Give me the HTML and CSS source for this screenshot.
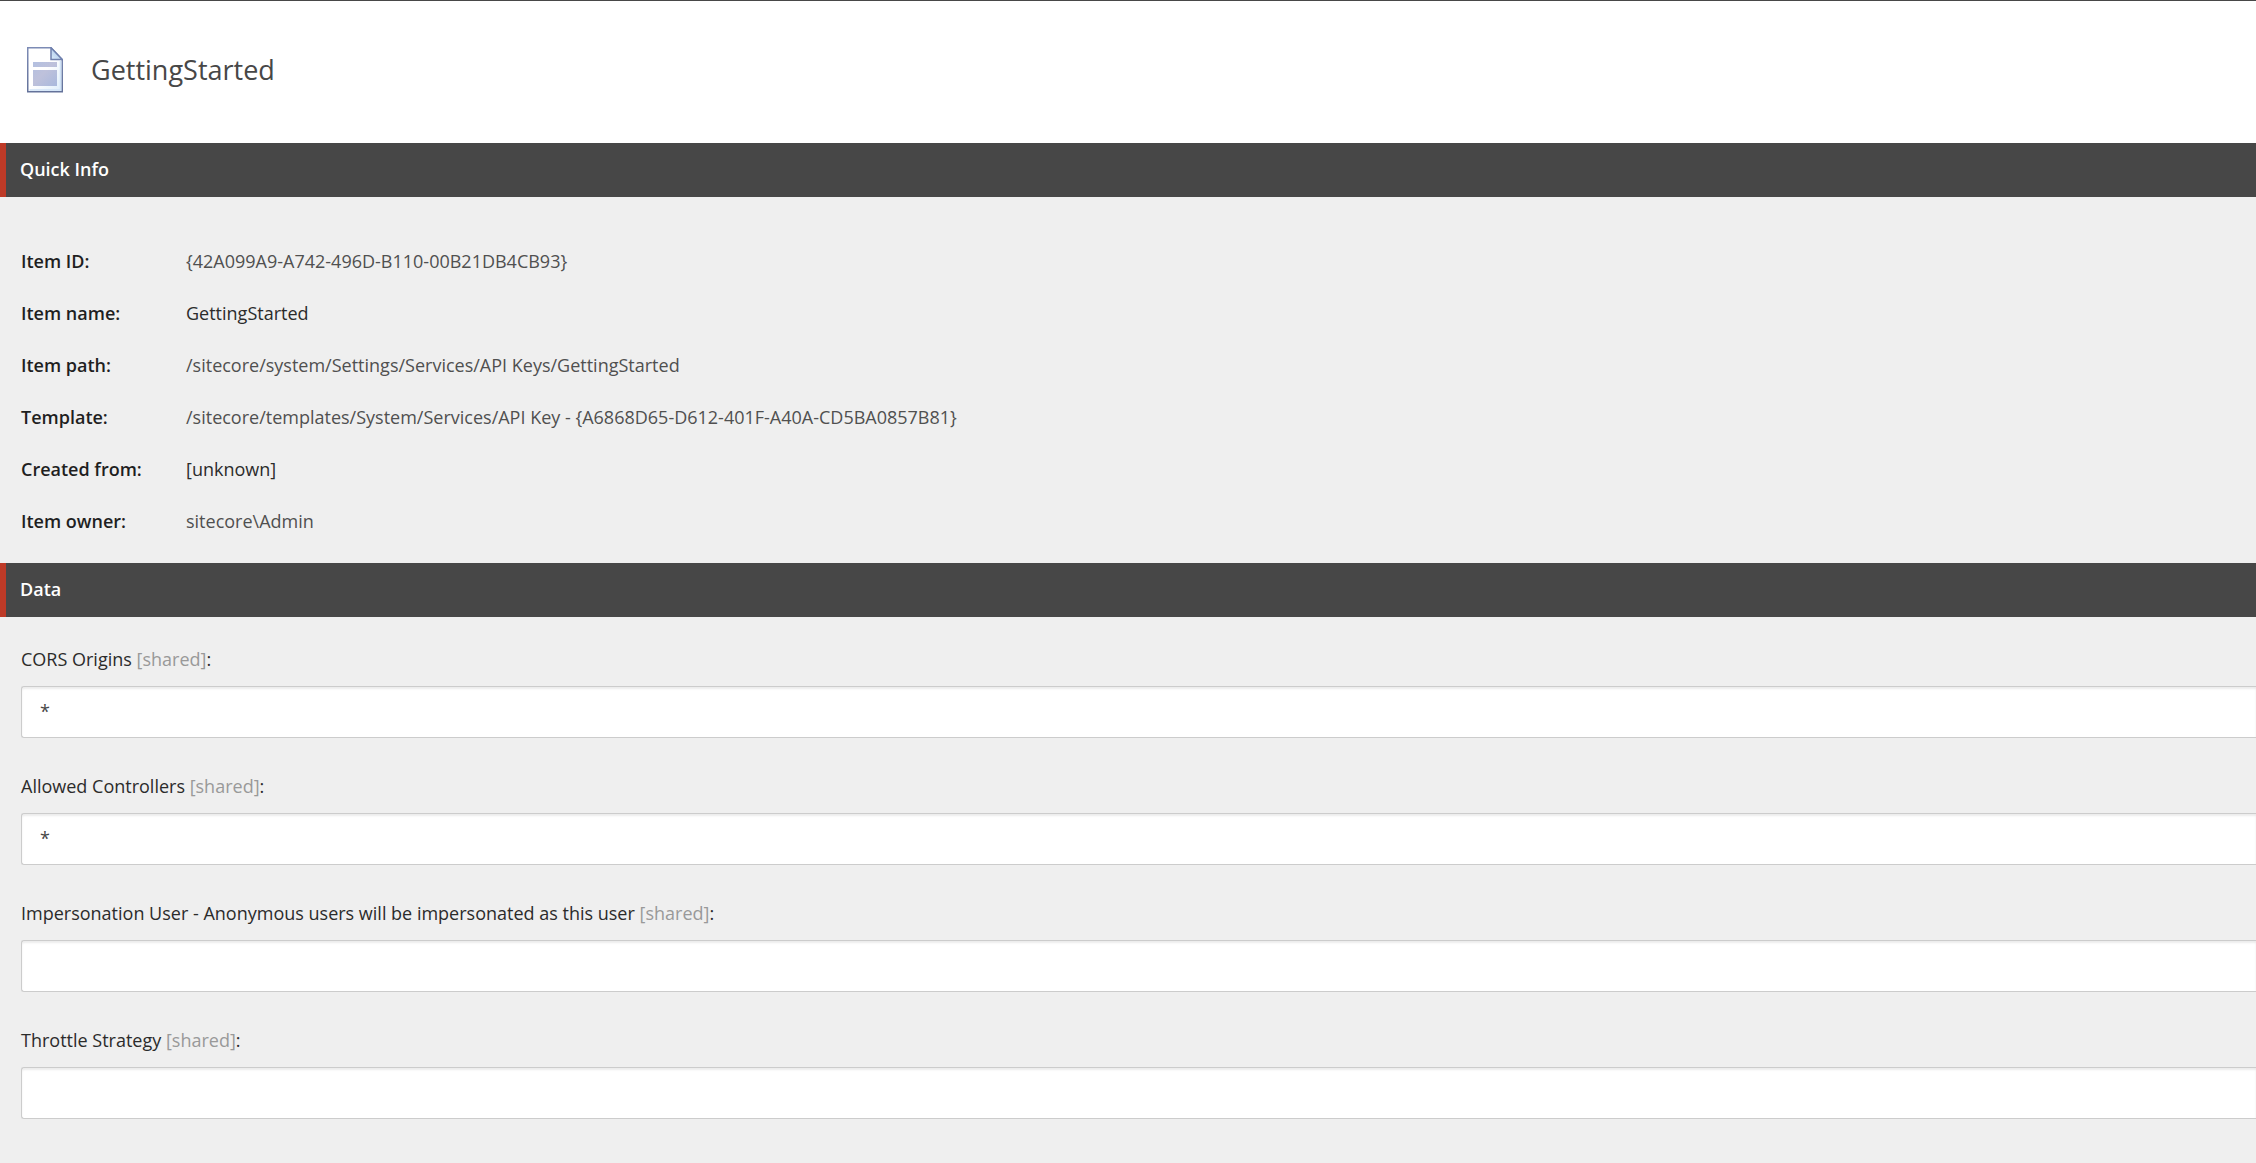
FILE: index.html
```html
<!DOCTYPE html>
<html lang="en">
<head>
    <meta charset="UTF-8">
    <meta name="viewport" content="width=device-width, initial-scale=1.0">
    <title>GettingStarted</title>
    <link rel="stylesheet" href="styles.css">
</head>
<body>
    <!-- Item header -->
    <header class="item-header">
        <svg class="item-icon" viewBox="0 0 36 46" aria-hidden="true">
            <defs>
                <linearGradient id="page" x1="0" y1="0" x2="1" y2="1">
                    <stop offset="0.5" stop-color="#ffffff"/>
                    <stop offset="1" stop-color="#dcecfb"/>
                </linearGradient>
                <linearGradient id="edge" x1="0" y1="0" x2="0" y2="1">
                    <stop offset="0" stop-color="#7c8bb5"/>
                    <stop offset="1" stop-color="#64729a"/>
                </linearGradient>
                <linearGradient id="block" gradientUnits="userSpaceOnUse" x1="6" y1="15" x2="30" y2="40">
                    <stop offset="0" stop-color="#b3c0e0"/>
                    <stop offset="0.45" stop-color="#bec1db"/>
                    <stop offset="1" stop-color="#a8b8dd"/>
                </linearGradient>
                <linearGradient id="fold" x1="0" y1="1" x2="1" y2="0">
                    <stop offset="0" stop-color="#dcedfc"/>
                    <stop offset="1" stop-color="#9dbce4"/>
                </linearGradient>
            </defs>
            <path d="M0.75 0.75H24L35.25 12.5V44.75H0.75Z" fill="url(#page)" stroke="url(#edge)" stroke-width="1.5"/>
            <path d="M2.5 43H33.5V14" fill="none" stroke="#cfe2f6" stroke-width="1.5"/>
            <path d="M24 0.75V12.5H35.25Z" fill="url(#fold)" stroke="#6f80ae" stroke-width="1.5"/>
            <rect x="6" y="15" width="24" height="5" fill="url(#block)"/>
            <rect x="6" y="23" width="24" height="16" fill="url(#block)"/>
        </svg>
        <h1 class="item-title">GettingStarted</h1>
    </header>

    <!-- Quick Info -->
    <section>
        <h2 class="section-title">Quick Info</h2>
        <table class="quick-info">
            <tr>
                <th scope="row">Item ID:</th>
                <td>{42A099A9-A742-496D-B110-00B21DB4CB93}</td>
            </tr>
            <tr>
                <th scope="row">Item name:</th>
                <td class="dark">GettingStarted</td>
            </tr>
            <tr>
                <th scope="row">Item path:</th>
                <td>/sitecore/system/Settings/Services/API Keys/GettingStarted</td>
            </tr>
            <tr>
                <th scope="row">Template:</th>
                <td>/sitecore/templates/System/Services/API Key - {A6868D65-D612-401F-A40A-CD5BA0857B81}</td>
            </tr>
            <tr>
                <th scope="row">Created from:</th>
                <td class="dark">[unknown]</td>
            </tr>
            <tr>
                <th scope="row">Item owner:</th>
                <td>sitecore\Admin</td>
            </tr>
        </table>
    </section>

    <!-- Data -->
    <section>
        <h2 class="section-title">Data</h2>
        <div class="fields">
            <div class="field">
                <label for="corsOrigins">CORS Origins <span class="shared">[shared]</span>:</label>
                <input type="text" id="corsOrigins" value="*">
            </div>
            <div class="field">
                <label for="allowedControllers">Allowed Controllers <span class="shared">[shared]</span>:</label>
                <input type="text" id="allowedControllers" value="*">
            </div>
            <div class="field">
                <label for="impersonationUser">Impersonation User - Anonymous users will be impersonated as this user <span class="shared">[shared]</span>:</label>
                <input type="text" id="impersonationUser">
            </div>
            <div class="field">
                <label for="throttleStrategy">Throttle Strategy <span class="shared">[shared]</span>:</label>
                <input type="text" id="throttleStrategy">
            </div>
        </div>
    </section>
</body>
</html>
```

FILE: styles.css
```css
* {
    margin: 0;
    padding: 0;
    box-sizing: border-box;
}

body {
    background: #efefef;
    color: #1f1f1f;
    font-family: 'Open Sans', sans-serif;
    font-size: 18px;
    line-height: 24px;
}

/* Item header */
.item-header {
    display: flex;
    align-items: center;
    gap: 28px;
    padding: 45px 27px 49px;
    background: #ffffff;
    border-top: 1px solid #474747;
}

.item-icon {
    width: 36px;
    height: 46px;
}

.item-title {
    font-size: 27px;
    font-weight: 400;
    line-height: 48px;
    color: #474747;
}

/* Section bars */
.section-title {
    padding: 14px 14px 16px;
    border-left: 6px solid #bd3a27;
    background: #474747;
    color: #ffffff;
    font-size: 18px;
    font-weight: 600;
    line-height: 24px;
}

/* Quick Info */
.quick-info {
    margin: 38px 21px 16px;
    border-collapse: collapse;
}

.quick-info th,
.quick-info td {
    height: 52px;
    text-align: left;
    vertical-align: middle;
}

.quick-info th {
    width: 165px;
    font-weight: 600;
}

.quick-info td {
    color: #505050;
}

.quick-info .dark {
    color: #2b2b2b;
}

/* Data */
.fields {
    display: flex;
    flex-direction: column;
    gap: 36px;
    padding: 30px 0 36px 21px;
}

.field {
    display: flex;
    flex-direction: column;
    gap: 15px;
}

.field label {
    color: #2b2b2b;
}

.field .shared {
    color: #999999;
}

.field input {
    width: 100%;
    height: 52px;
    padding: 10px 18px 12px;
    border: 1px solid #cccccc;
    border-right: 0;
    border-radius: 3px 0 0 3px;
    background: #ffffff;
    box-shadow: inset 0 2px 2px rgba(0, 0, 0, 0.08);
    color: #474747;
    font-family: inherit;
    font-size: 18px;
}
```
